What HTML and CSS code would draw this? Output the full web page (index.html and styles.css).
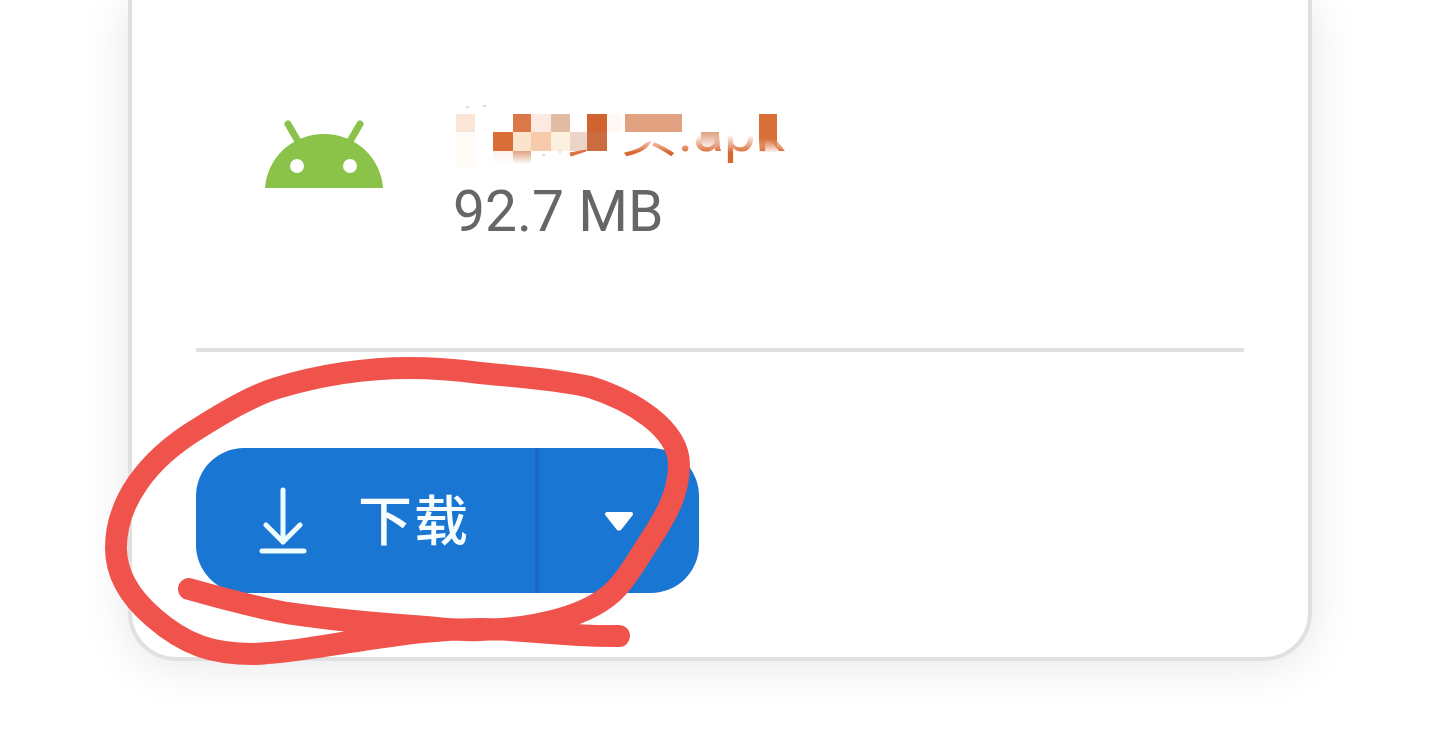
FILE: index.html
```html
<!DOCTYPE html>
<html lang="zh-CN">
<head>
    <meta charset="UTF-8">
    <meta name="viewport" content="width=device-width, initial-scale=1.0">
    <title>下载</title>
    <link rel="stylesheet" href="styles.css">
</head>
<body>
    <main class="card">
        <div class="file">
            <svg class="file-icon" viewBox="0 0 118 68" aria-hidden="true">
                <path d="M0 68C2 38 27 14 59 14S116 38 118 68Z" fill="#8bc34a"/>
                <path d="M23 4L34 23M95 4L84 23" stroke="#8bc34a" stroke-width="7" stroke-linecap="round"/>
                <circle cx="32" cy="46" r="7" fill="#fff"/>
                <circle cx="85" cy="46" r="7" fill="#fff"/>
            </svg>
            <div class="file-info">
                <div class="file-name">
                    <span>页.apk</span>
                    <!-- 文件名马赛克 -->
                    <svg class="mosaic" viewBox="0 0 352 72" aria-hidden="true">
                        <defs>
                            <linearGradient id="fade" x1="0" y1="0" x2="0" y2="1">
                                <stop offset="0.62" stop-color="#fff"/>
                                <stop offset="0.94" stop-color="#fff" stop-opacity="0"/>
                            </linearGradient>
                            <linearGradient id="tail" x1="0" y1="0" x2="0" y2="1">
                                <stop offset="0" stop-color="#e0a080"/>
                                <stop offset="1" stop-color="#e0a080" stop-opacity="0"/>
                            </linearGradient>
                            <linearGradient id="block" x1="0" y1="0" x2="0" y2="1">
                                <stop offset="0.65" stop-color="#da6e37"/>
                                <stop offset="1" stop-color="#da6e37" stop-opacity="0.1"/>
                            </linearGradient>
                        </defs>
                        <rect x="170" y="0" width="180" height="56" fill="url(#fade)"/>
                        <path d="M182 30H244V46H228L213 40L198 46H182Z" fill="#fff"/>
                        <rect x="16" y="14" width="19" height="18" fill="#fae5d6"/>
                        <rect x="16" y="32" width="19" height="35" fill="#fffcf8"/>
                        <rect x="73" y="14" width="18" height="18" fill="#da7848"/>
                        <rect x="91" y="14" width="20" height="18" fill="#fce9e2"/>
                        <rect x="111" y="14" width="19" height="18" fill="#e2bba3"/>
                        <rect x="53" y="32" width="20" height="19" fill="#da6e37"/>
                        <rect x="73" y="32" width="18" height="19" fill="#fce3cc"/>
                        <rect x="91" y="32" width="20" height="19" fill="#f7caaa"/>
                        <rect x="111" y="32" width="19" height="19" fill="#fcf0df"/>
                        <rect x="130" y="32" width="17" height="19" fill="#edd4c8"/>
                        <rect x="147" y="14" width="20" height="18" fill="#d0632f"/>
                        <rect x="147" y="32" width="20" height="19" fill="#cb6b40"/>
                        <rect x="167" y="14" width="14" height="18" fill="#fff8f5"/>
                        <rect x="73" y="51" width="18" height="13" fill="url(#tail)"/>
                        <rect x="53" y="51" width="20" height="14" fill="url(#tail)" opacity="0.15"/>
                        <path d="M130 53L146 50V51L131 56Z" fill="#d9713e" stroke="#d9713e"/>
                        <rect x="185" y="14" width="57" height="18" fill="#e2a180"/>
                        <rect x="261" y="32" width="18" height="18" fill="url(#tail)"/>
                        <rect x="319" y="14" width="18" height="38" fill="url(#block)"/>
                        <path d="M26 7h3M43 6h3M102 55h3M119 52h2" stroke="#ddd" stroke-width="2"/>
                    </svg>
                </div>
                <div class="file-size">92.7 MB</div>
            </div>
        </div>

        <div class="actions">
            <button type="button" class="download">
                <svg class="download-icon" viewBox="0 0 48 68" aria-hidden="true">
                    <path d="M24 3V55M7 38L24 55L41 38M3 64H45" fill="none" stroke="#f0fdff" stroke-width="5" stroke-linecap="round" stroke-linejoin="round"/>
                </svg>
                <span class="label">下载</span>
            </button>
            <button type="button" class="more" aria-label="更多">
                <svg class="caret" viewBox="0 0 30 20" aria-hidden="true">
                    <path d="M3 3H27L16 17Q15 18 14 17Z" fill="#fff" stroke="#fff" stroke-width="4" stroke-linejoin="round"/>
                </svg>
            </button>
            <svg class="scribble" viewBox="0 0 600 320" aria-hidden="true">
                <path d="M93 241C125 250 158 259 191 265C238 272 284 276 330 279C350 281 367 283 384 282C440 281 495 268 521 240C534 226 541 212 551 197C565 175 583 150 583 117C583 80 535 52 494 39C455 30 420 29 384 25C361 22 338 20 314 20C268 20 224 27 181 40C155 48 127 65 103 80C50 112 20 155 20 200C20 228 35 250 57 269C90 298 118 306 157 306C195 305 230 297 267 292C301 287 335 281 384 281C434 281 464 289 523 288"/>
            </svg>
        </div>
    </main>
</body>
</html>
```
FILE: styles.css
```css
body {
    min-height: 100vh;
    margin: 0;
    background-color: #fff;
    font-family: Roboto, "Noto Sans CJK SC", sans-serif;
}

.card {
    margin: 0 128px;
    padding: 0 64px 64px;
    border: 4px solid #e0e0e0;
    border-top: none;
    border-radius: 0 0 48px 48px;
    box-shadow: 0 4px 48px rgba(0, 0, 0, 0.1);
}

.file {
    display: flex;
    align-items: flex-start;
    gap: 70px;
    padding: 100px 69px 104px;
    border-bottom: 4px solid #e0e0e0;
}

.file-icon {
    width: 118px;
    height: 68px;
    margin-top: 20px;
}

.file-name {
    position: relative;
    height: 80px;
    padding-left: 168px;
    color: #d9662f;
    font-size: 57px;
    line-height: 64px;
    white-space: nowrap;
}

.mosaic {
    position: absolute;
    top: 0;
    left: -13px;
    width: 352px;
    height: 72px;
}

.file-size {
    color: #666;
    font-size: 57px;
    line-height: 64px;
}

.actions {
    position: relative;
    display: flex;
    margin-top: 96px;
}

button {
    display: flex;
    align-items: center;
    height: 145px;
    border: none;
    background-color: #1976d2;
    color: #f8feff;
    font-family: inherit;
    cursor: pointer;
}

.download {
    gap: 51px;
    padding: 0 65px 0 63px;
    border-right: 4px solid #1669c1;
    border-radius: 48px 0 0 48px;
    font-size: 54px;
    font-weight: 500;
    letter-spacing: 2px;
}

.label {
    padding-bottom: 6px;
}

.download-icon {
    width: 48px;
    height: 68px;
}

.more {
    justify-content: center;
    width: 160px;
    border-radius: 0 48px 48px 0;
}

.caret {
    width: 30px;
    height: 20px;
}

.scribble {
    position: absolute;
    top: -100px;
    left: -100px;
    width: 600px;
    height: 320px;
    pointer-events: none;
}

.scribble path {
    fill: none;
    stroke: #f0534c;
    stroke-width: 22px;
    stroke-linecap: round;
    stroke-linejoin: round;
}
```
